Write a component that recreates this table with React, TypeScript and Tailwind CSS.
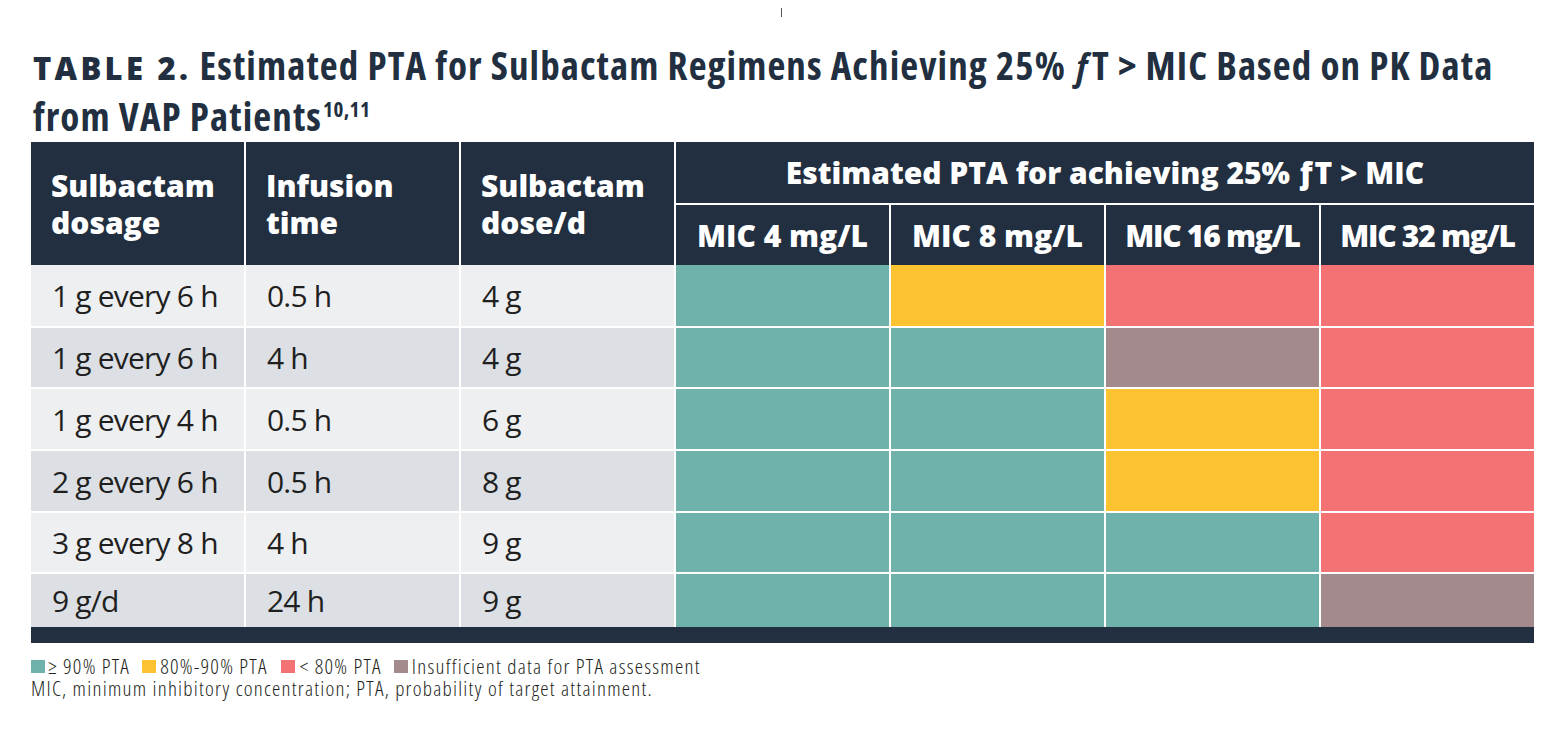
import React from "react";

const C = {
  g: "bg-[#6fb2ab]",
  y: "bg-[#fdc22f]",
  r: "bg-[#f37273]",
  m: "bg-[#a38a8c]",
};

type Row = { dose: string; inf: string; day: string; cells: (keyof typeof C)[]; h: string };

const rows: Row[] = [
  { dose: "1 g every 6 h", inf: "0.5 h", day: "4 g", cells: ["g", "y", "r", "r"], h: "h-[61px]" },
  { dose: "1 g every 6 h", inf: "4 h", day: "4 g", cells: ["g", "g", "m", "r"], h: "h-[59px]" },
  { dose: "1 g every 4 h", inf: "0.5 h", day: "6 g", cells: ["g", "g", "y", "r"], h: "h-[60px]" },
  { dose: "2 g every 6 h", inf: "0.5 h", day: "8 g", cells: ["g", "g", "y", "r"], h: "h-[60px]" },
  { dose: "3 g every 8 h", inf: "4 h", day: "9 g", cells: ["g", "g", "g", "r"], h: "h-[59px]" },
  { dose: "9 g/d", inf: "24 h", day: "9 g", cells: ["g", "g", "g", "m"], h: "h-[53px]" },
];

const mics = [
  { t: "MIC 4 mg/L", k: "" },
  { t: "MIC 8 mg/L", k: "" },
  { t: "MIC 16 mg/L", k: "tracking-[-1.3px]" },
  { t: "MIC 32 mg/L", k: "tracking-[-1.3px]" },
];

const font = "font-['Open_Sans',sans-serif]";

export default function App() {
  return (
    <div className={`w-[1558px] h-[748px] bg-white text-[#222f40] ${font}`}>
      <div className="ml-[781px] pt-[8px]">
        <div className="w-px h-[9px] bg-[#555]" />
      </div>
      <h1 className="mt-[24px] ml-[33px] h-[96px] text-[39px] leading-[48px] font-bold [font-stretch:75%] tracking-[1.1px] text-[#222f40] whitespace-nowrap">
        <span className="font-extrabold [font-stretch:100%] tracking-[3.3px] text-[31px]">TABLE 2.</span>{" "}
        Estimated PTA for Sulbactam Regimens Achieving 25% <span className="italic">ƒ</span>T &gt; MIC Based on PK Data
        <br />
        from VAP Patients
        <sup className="text-[21px] top-[-14px] ml-[1px] tracking-[0.5px]">10,11</sup>
      </h1>

      <div className="ml-[31px] mt-[5px] w-[1503px]">
        <div className="grid grid-cols-7 gap-[2px] bg-white">
          {["Sulbactam dosage", "Infusion time", "Sulbactam dose/d"].map((t, i) => (
            <div
              key={i}
              className="row-span-2 bg-[#222f40] text-white font-extrabold text-[30px] leading-[37px] pl-[20px] pr-2 flex items-center"
            >
              <div>
                {t.split(" ").map((w, j) => (
                  <div key={j}>{w}</div>
                ))}
              </div>
            </div>
          ))}
          <div className="col-span-4 h-[61px] bg-[#222f40] text-white font-extrabold text-[30px] flex items-center justify-center">
            Estimated PTA for achieving 25% ƒT &gt; MIC
          </div>
          {mics.map((m) => (
            <div
              key={m.t}
              className={`h-[60px] bg-[#222f40] text-white font-extrabold text-[30px] flex items-center justify-center ${m.k}`}
            >
              {m.t}
            </div>
          ))}
        </div>
        <div className="flex flex-col gap-[2px] bg-white">
          {rows.map((r, i) => (
            <div key={i} className={`grid grid-cols-7 gap-x-[2px] ${r.h}`}>
              {[r.dose, r.inf, r.day].map((t, j) => (
                <div
                  key={j}
                  className={`${i % 2 === 0 ? "bg-[#eeeff1]" : "bg-[#dcdfe4]"} text-[30px] tracking-[-0.8px] text-[#1f1f1f] pl-[21px] flex items-center`}
                >
                  {t}
                </div>
              ))}
              {r.cells.map((c, j) => (
                <div key={j} className={C[c]} />
              ))}
            </div>
          ))}
        </div>
        <div className="h-[16px] bg-[#222f40]" />
      </div>

      <div className="ml-[31px] mt-[12px] text-[21px] leading-[22px] font-light [font-stretch:75%] tracking-[1.25px] text-[#231f20]">
        <div className="flex items-center h-[22px]">
          <span className="w-[14px] h-[13px] bg-[#6fb2ab] mr-[3px]" />
          <span className="mr-[12px]">≥ 90% PTA</span>
          <span className="w-[14px] h-[13px] bg-[#fdc22f] mr-[4px]" />
          <span className="mr-[13px]">80%-90% PTA</span>
          <span className="w-[14px] h-[13px] bg-[#f37273] mr-[5px]" />
          <span className="mr-[12px]">&lt; 80% PTA</span>
          <span className="w-[14px] h-[13px] bg-[#a38a8c] mr-[4px]" />
          <span>Insufficient data for PTA assessment</span>
        </div>
        <div>MIC, minimum inhibitory concentration; PTA, probability of target attainment.</div>
      </div>
    </div>
  );
}
